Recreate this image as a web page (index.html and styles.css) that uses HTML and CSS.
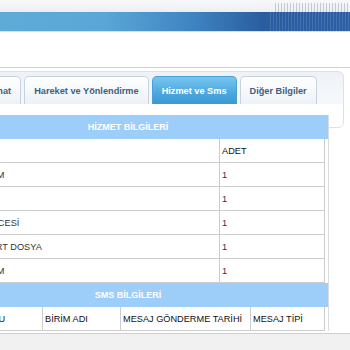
FILE: index.html
```html
<!DOCTYPE html>
<html lang="tr">
<head>
    <meta charset="UTF-8">
    <title>Dosya Detay</title>
    <link rel="stylesheet" href="styles.css">
</head>
<body>
    <div class="banner">
        <div class="banner-top"></div>
        <div class="band"></div>
    </div>

    <div class="main">
        <div class="tabbox">
            <ul class="tabs">
                <li class="tab">Tazminat</li>
                <li class="tab">Hareket ve Yönlendirme</li>
                <li class="tab active">Hizmet ve Sms</li>
                <li class="tab">Diğer Bilgiler</li>
            </ul>
        </div>

        <div class="section">
            <div class="caption">HİZMET BİLGİLERİ</div>
            <table class="grid">
                <tr><td class="c-name"></td><td class="head">ADET</td></tr>
                <tr><td>ADRESE TESLİM</td><td>1</td></tr>
                <tr><td>KARGO</td><td>1</td></tr>
                <tr><td>GÖNDERİM ÖNCESİ</td><td>1</td></tr>
                <tr><td>HASAR EKSPERT DOSYA</td><td>1</td></tr>
                <tr><td>ŞUBEDE TESLİM</td><td>1</td></tr>
            </table>

            <div class="caption">SMS BİLGİLERİ</div>
            <table class="grid sms">
                <tr>
                    <td class="s1 head">MESAJ DURUMU</td>
                    <td class="s2 head">BİRİM ADI</td>
                    <td class="s3 head">MESAJ GÖNDERME TARİHİ</td>
                    <td class="head">MESAJ TİPİ</td>
                </tr>
            </table>
        </div>
    </div>

    <div class="footer"></div>
</body>
</html>
```

FILE: styles.css
```css
html, body { margin: 0; padding: 0; }
body {
    font-family: "Liberation Sans", Arial, sans-serif;
    background: #fff;
    color: #333;
    overflow: hidden;
    height: 350px;
}

/* ust banner */
.banner-top {
    height: 12px;
    background:
        repeating-linear-gradient(90deg, rgba(150,170,195,0.55) 0 1px, transparent 1px 3px) right 3px / 75px 10px no-repeat,
        linear-gradient(#f7f8fa, #eceff3);
}
.band {
    height: 19px;
    border-bottom: 1px solid #cfe0ee;
    background:
        repeating-linear-gradient(90deg, rgba(255,255,255,0.12) 0 1px, transparent 1px 3px) right top / 80px 100% no-repeat,
        linear-gradient(90deg, #5eabd8 0%, #5aa6d6 30%, #3f84c2 55%, #2a5d9f 75%, #2b5ea4 100%);
}

.main {
    margin-top: 35px;
    border-top: 1px solid #cfcfcf;
    padding-top: 3px;
}

/* sekmeler */
.tabbox {
    box-sizing: border-box;
    width: 424px;
    height: 57px;
    margin-left: -80px;
    border: 1px solid #dbe1e8;
    border-radius: 6px;
    background: linear-gradient(#eef2f7, #f6f9fc 32px, #fff 32px);
}
.tabs {
    list-style: none;
    margin: 0;
    padding: 4px 0 0 41px;
    display: flex;
    gap: 3px;
}
.tab {
    height: 28px;
    line-height: 28px;
    box-sizing: border-box;
    padding: 0 9px;
    border: 1px solid #c5d2df;
    border-bottom: none;
    border-radius: 5px 5px 0 0;
    background: linear-gradient(#ffffff, #edf2f7);
    color: #3f5f82;
    font-size: 9.2px;
    font-weight: bold;
    white-space: nowrap;
}
.tab.active {
    border-color: #4a9fd3;
    background: linear-gradient(#78c6f0, #4aa8de 60%, #3b98d2);
    color: #fff;
}

/* tablo */
.section {
    box-sizing: border-box;
    width: 401px;
    margin: -13px 0 0 -72px;
    border-right: 1px solid #dcdcdc;
}
.caption {
    height: 24px;
    line-height: 24px;
    background: #9dcdf9;
    color: #fff;
    font-size: 9px;
    font-weight: bold;
    text-align: center;
}
.grid {
    width: 397px;
    border-collapse: collapse;
    font-size: 9.2px;
}
.grid td {
    height: 23px;
    padding: 0 1px 0 2px;
    border: 1px solid #cdcdcd;
    border-top: none;
    white-space: nowrap;
    color: #333;
}
.grid .c-name { width: 287px; }
.grid .head { color: #111; }
.sms .s1 { width: 110px; }
.sms .s2 { width: 74px; }
.sms .s3 { width: 126px; }

.footer {
    margin-top: 2px;
    height: 20px;
    border-top: 1px solid #cfcfcf;
    background: #f1f1f1;
}
```
